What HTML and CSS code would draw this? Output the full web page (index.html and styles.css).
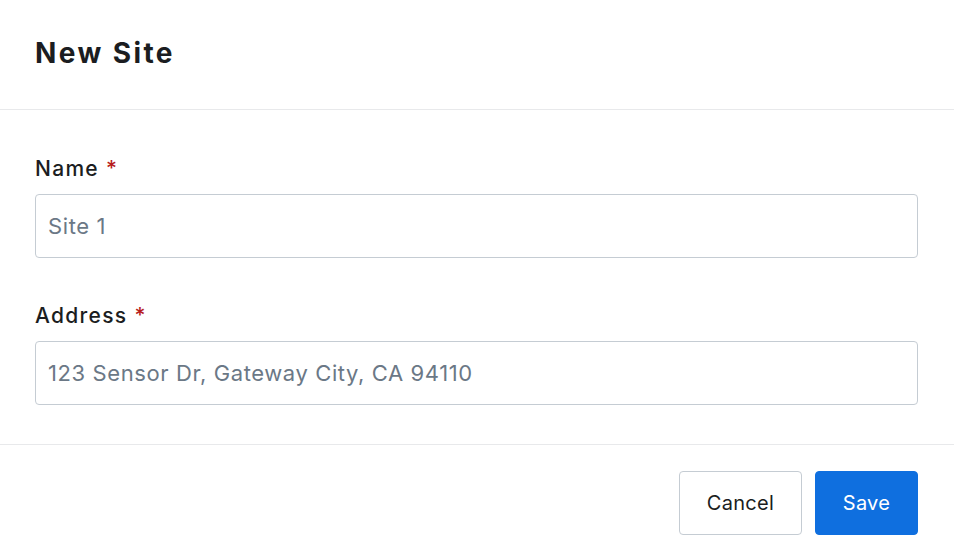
FILE: index.html
```html
<!DOCTYPE html>
<html>
<head>
<meta charset="utf-8">
<link rel="stylesheet" href="styles.css">
</head>
<body>
<div class="dialog">
  <header class="header"><h1 class="title">New Site</h1></header>
  <div class="body">
    <div class="field">
      <label class="label">Name <span class="req">*</span></label>
      <div class="input">Site 1</div>
    </div>
    <div class="field">
      <label class="label">Address <span class="req">*</span></label>
      <div class="input">123 Sensor Dr, Gateway City, CA 94110</div>
    </div>
  </div>
  <footer class="footer">
    <button class="btn btn-secondary">Cancel</button>
    <button class="btn btn-primary">Save</button>
  </footer>
</div>
</body>
</html>
```
FILE: styles.css
```css
html, body { margin: 0; padding: 0; background: #fff; }
body { font-family: Inter, "Noto Sans", sans-serif; color: #1b1d21; width: 954px; height: 558px; overflow: hidden; }
.dialog { display: flex; flex-direction: column; }
.header { height: 109px; border-bottom: 1px solid #e8e9eb; display: flex; align-items: center; padding: 0 35px; }
.title { margin: 0; font-size: 28px; font-weight: 700; letter-spacing: 2.4px; position: relative; top: -2px; }
.body { padding: 47px 36px 39px 35px; display: flex; flex-direction: column; gap: 46px; border-bottom: 1px solid #e8e9eb; }
.field { display: flex; flex-direction: column; gap: 13px; }
.label { font-size: 21px; font-weight: 500; line-height: 24px; letter-spacing: 1.3px; }
.req { color: #b71c1c; }
.input { height: 62px; border: 1px solid #c5ccd3; border-radius: 4px; padding: 0 13px 0 12px; display: flex; align-items: center; font-size: 22px; letter-spacing: 0.6px; color: #6b7886; }
.footer { display: flex; justify-content: flex-end; gap: 13px; padding: 26px 36px 0 35px; }
.btn { height: 64px; font-family: inherit; font-size: 20px; letter-spacing: 0.3px; border-radius: 4px; padding: 0; }
.btn-secondary { width: 123px; background: #fff; border: 1px solid #c5ccd3; color: #1b1d21; }
.btn-primary { width: 103px; background: #0f6fdf; border: 1px solid #0f6fdf; color: #fff; }
```
